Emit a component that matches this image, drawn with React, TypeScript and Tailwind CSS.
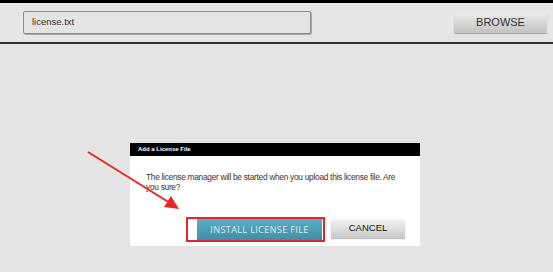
export default function App() {
  return (
    <div className="relative h-[272px] w-[553px] overflow-hidden bg-[#e4e4e4] font-['Liberation_Sans',Arial,sans-serif]">
      {/* top file bar */}
      <div className="flex h-[44px] items-start justify-between border-t-[3px] border-b-2 border-t-black border-b-[#2f2f2f] bg-[#e6e6e6] pl-[23px] pr-[6px]">
        <div className="mt-[8px] flex h-[23px] w-[288px] items-center rounded-[2px] border border-[#8c8c8c] bg-[#e4e4e4] pl-[8px] text-[9.5px] text-[#333] shadow-[1px_1px_0_#a8a8a8]">
          license.txt
        </div>
        <button className="mt-[9px] h-[21px] w-[93px] rounded-[2px] bg-gradient-to-b from-[#ececec] to-[#c2c2c2] text-[11px] text-[#333] shadow-[0_1px_1px_rgba(0,0,0,0.3)]">
          BROWSE
        </button>
      </div>

      {/* dialog */}
      <div className="ml-[130px] mt-[99px] w-[290px] bg-white">
        <div className="flex h-[13px] items-center bg-black pl-[8px] text-[6px] font-bold text-white">
          Add a License File
        </div>
        <p className="pl-[16px] pr-[20px] pt-[16px] text-[8.4px] leading-[10px] tracking-[-0.3px] text-[#3d3430]">
          The license manager will be started when you upload this license file. Are you sure?
        </p>
        <div className="mt-[25px] flex items-start pb-[4px] pl-[56px]">
          <div className="flex border-2 border-[#e3262b] bg-white pl-[9px] pr-px">
            <button className="h-[21px] w-[125px] bg-gradient-to-b from-[#5aaec6] to-[#3f8ea6] text-[9.2px] tracking-[0.3px] text-[#dde9ee] font-['Open_Sans',sans-serif]">
              INSTALL LICENSE FILE
            </button>
          </div>
          <button className="ml-[6px] mt-[2px] h-[19px] w-[74px] bg-gradient-to-b from-[#f4f4f4] to-[#c8c8c8] text-[9.5px] text-[#111] shadow-[0_1px_1px_rgba(0,0,0,0.25)]">
            CANCEL
          </button>
        </div>
      </div>

      {/* red annotation arrow */}
      <svg className="absolute left-0 top-0" width="553" height="272" viewBox="0 0 553 272">
        <line x1="88" y1="152" x2="170" y2="203" stroke="#e8262a" strokeWidth="2" />
        <polygon points="179,209 164,207 171,196" fill="#e8262a" />
      </svg>
    </div>
  )
}
